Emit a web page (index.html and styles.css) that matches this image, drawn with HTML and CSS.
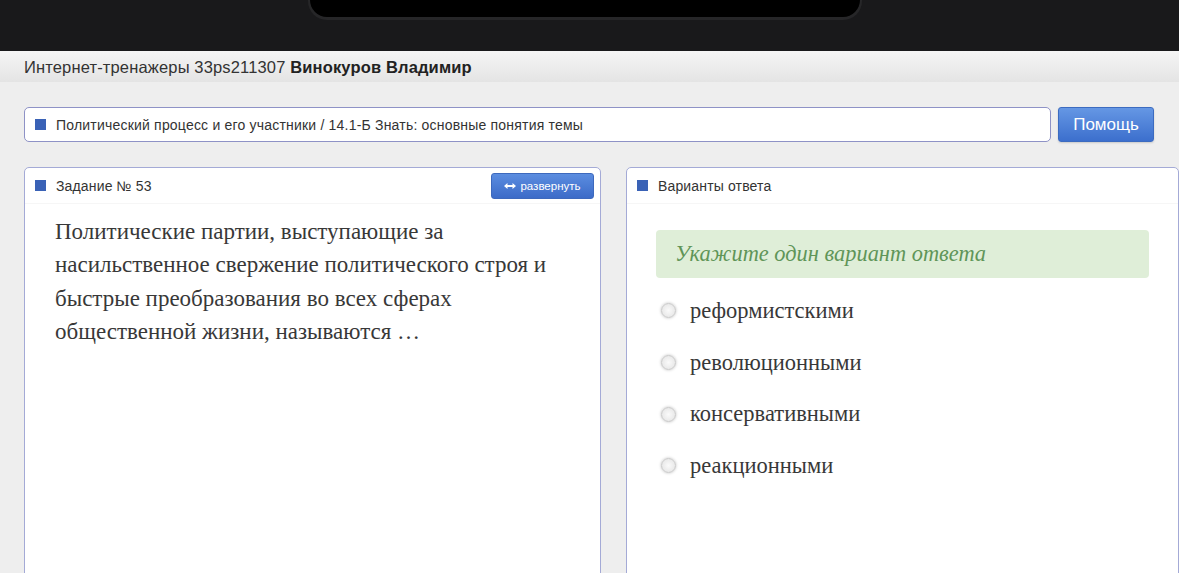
FILE: index.html
```html
<!DOCTYPE html>
<html lang="ru">
<head>
    <meta charset="UTF-8">
    <meta name="viewport" content="width=device-width, initial-scale=1.0">
    <title>Интернет-тренажеры</title>
    <link rel="stylesheet" href="styles.css">
</head>
<body>
    <div class="device-top">
        <div class="notch"></div>
    </div>

    <div class="topline">
        Интернет-тренажеры 33ps211307 <b>Винокуров Владимир</b>
    </div>

    <div class="page">
        <div class="crumbs-row">
            <div class="crumbs">
                <span class="marker"></span>
                Политический процесс и его участники / 14.1-Б Знать: основные понятия темы
            </div>
            <button class="btn-help">Помощь</button>
        </div>

        <div class="panels">
            <div class="panel">
                <div class="panel-head">
                    <span class="marker"></span>
                    <span class="panel-title">Задание № 53</span>
                    <button class="btn-expand">
                        <svg width="12" height="8" viewBox="0 0 12 8"><path d="M0 4 L3.5 1 V3 H8.5 V1 L12 4 L8.5 7 V5 H3.5 V7 Z" fill="#fff"/></svg>
                        развернуть
                    </button>
                </div>
                <div class="question">
                    Политические партии, выступающие за насильственное свержение политического строя и быстрые преобразования во всех сферах общественной жизни, называются …
                </div>
            </div>

            <div class="panel">
                <div class="panel-head">
                    <span class="marker"></span>
                    <span class="panel-title">Варианты ответа</span>
                </div>
                <div class="answers">
                    <div class="hint">Укажите один вариант ответа</div>
                    <label class="option"><input type="radio" name="a"><span>реформистскими</span></label>
                    <label class="option"><input type="radio" name="a"><span>революционными</span></label>
                    <label class="option"><input type="radio" name="a"><span>консервативными</span></label>
                    <label class="option"><input type="radio" name="a"><span>реакционными</span></label>
                </div>
            </div>
        </div>
    </div>
</body>
</html>
```

FILE: styles.css
```css
body {
    margin: 0;
    background-color: #eeeeee;
    font-family: "Liberation Sans", Arial, sans-serif;
    color: #333;
    overflow: hidden;
}
.device-top {
    height: 51px;
    background-color: #19191b;
    padding-left: 310px;
}
.notch {
    width: 550px;
    height: 17px;
    background-color: #000;
    border-radius: 0 0 28px 28px;
    box-shadow: 0 1px 0 2px #262628;
}
.topline {
    height: 31px;
    line-height: 33px;
    padding-left: 24px;
    font-size: 16.5px;
    letter-spacing: 0.15px;
    background: linear-gradient(#f5f5f5, #e4e4e4);
    color: #333;
}
.topline b {
    color: #222;
}
.page {
    padding: 25px 0 0 24px;
}
.crumbs-row {
    display: flex;
    gap: 7px;
    width: 1130px;
}
.crumbs {
    flex: 1;
    height: 33px;
    display: flex;
    align-items: center;
    gap: 10px;
    padding-left: 10px;
    background-color: #fff;
    border: 1px solid #8e92c6;
    border-radius: 5px;
    font-size: 14px;
    letter-spacing: 0.2px;
    color: #333;
}
.marker {
    width: 11px;
    height: 11px;
    background-color: #3a62b6;
    flex-shrink: 0;
}
.btn-help {
    width: 96px;
    height: 35px;
    border: 1px solid #3c6bc0;
    border-radius: 3px;
    background: linear-gradient(#6597e4, #3c6fcd);
    color: #fff;
    font-family: "Liberation Sans", Arial, sans-serif;
    font-size: 17px;
    box-shadow: 0 1px 2px rgba(0, 0, 0, 0.15);
}
.panels {
    display: grid;
    grid-template-columns: 577px 553px;
    gap: 25px;
    margin-top: 25px;
}
.panel {
    min-height: 420px;
    background-color: #fff;
    border: 1px solid #a4aad6;
    border-radius: 5px 5px 0 0;
}
.panel-head {
    display: flex;
    align-items: center;
    gap: 10px;
    height: 35px;
    padding: 0 6px 0 10px;
    font-size: 14px;
    letter-spacing: 0.15px;
    border-bottom: 1px solid #f6f6f6;
}
.panel-title {
    flex: 1;
}
.btn-expand {
    height: 26px;
    width: 103px;
    display: flex;
    align-items: center;
    justify-content: center;
    gap: 4px;
    border: 1px solid #3d69bd;
    border-radius: 3px;
    background: linear-gradient(#5b8de0, #3c6bc8);
    color: #fff;
    font-family: "Liberation Sans", Arial, sans-serif;
    font-size: 11.5px;
    letter-spacing: 0;
    padding: 0;
}
.question {
    padding: 11px 40px 0 30px;
    font-family: "Liberation Serif", "Times New Roman", serif;
    font-size: 23px;
    line-height: 33.3px;
    color: #383838;
}
.answers {
    padding: 26px 29px 0 29px;
}
.hint {
    height: 48px;
    display: flex;
    align-items: center;
    padding-left: 19px;
    background-color: #dfeed8;
    border-radius: 4px;
    font-family: "Liberation Serif", "Times New Roman", serif;
    font-style: italic;
    font-size: 22.4px;
    color: #5f9558;
    margin-bottom: 7px;
}
.option {
    display: flex;
    align-items: center;
    gap: 14px;
    height: 51.7px;
    padding-left: 5px;
    font-family: "Liberation Serif", "Times New Roman", serif;
    font-size: 22.5px;
    color: #383838;
}
.option input {
    appearance: none;
    width: 15px;
    height: 15px;
    margin: 0;
    border-radius: 50%;
    border: 1px solid #c8c8c8;
    background: radial-gradient(#fafafa, #e2e2e2);
    box-shadow: 0 0 3px rgba(0, 0, 0, 0.25);
}
```
